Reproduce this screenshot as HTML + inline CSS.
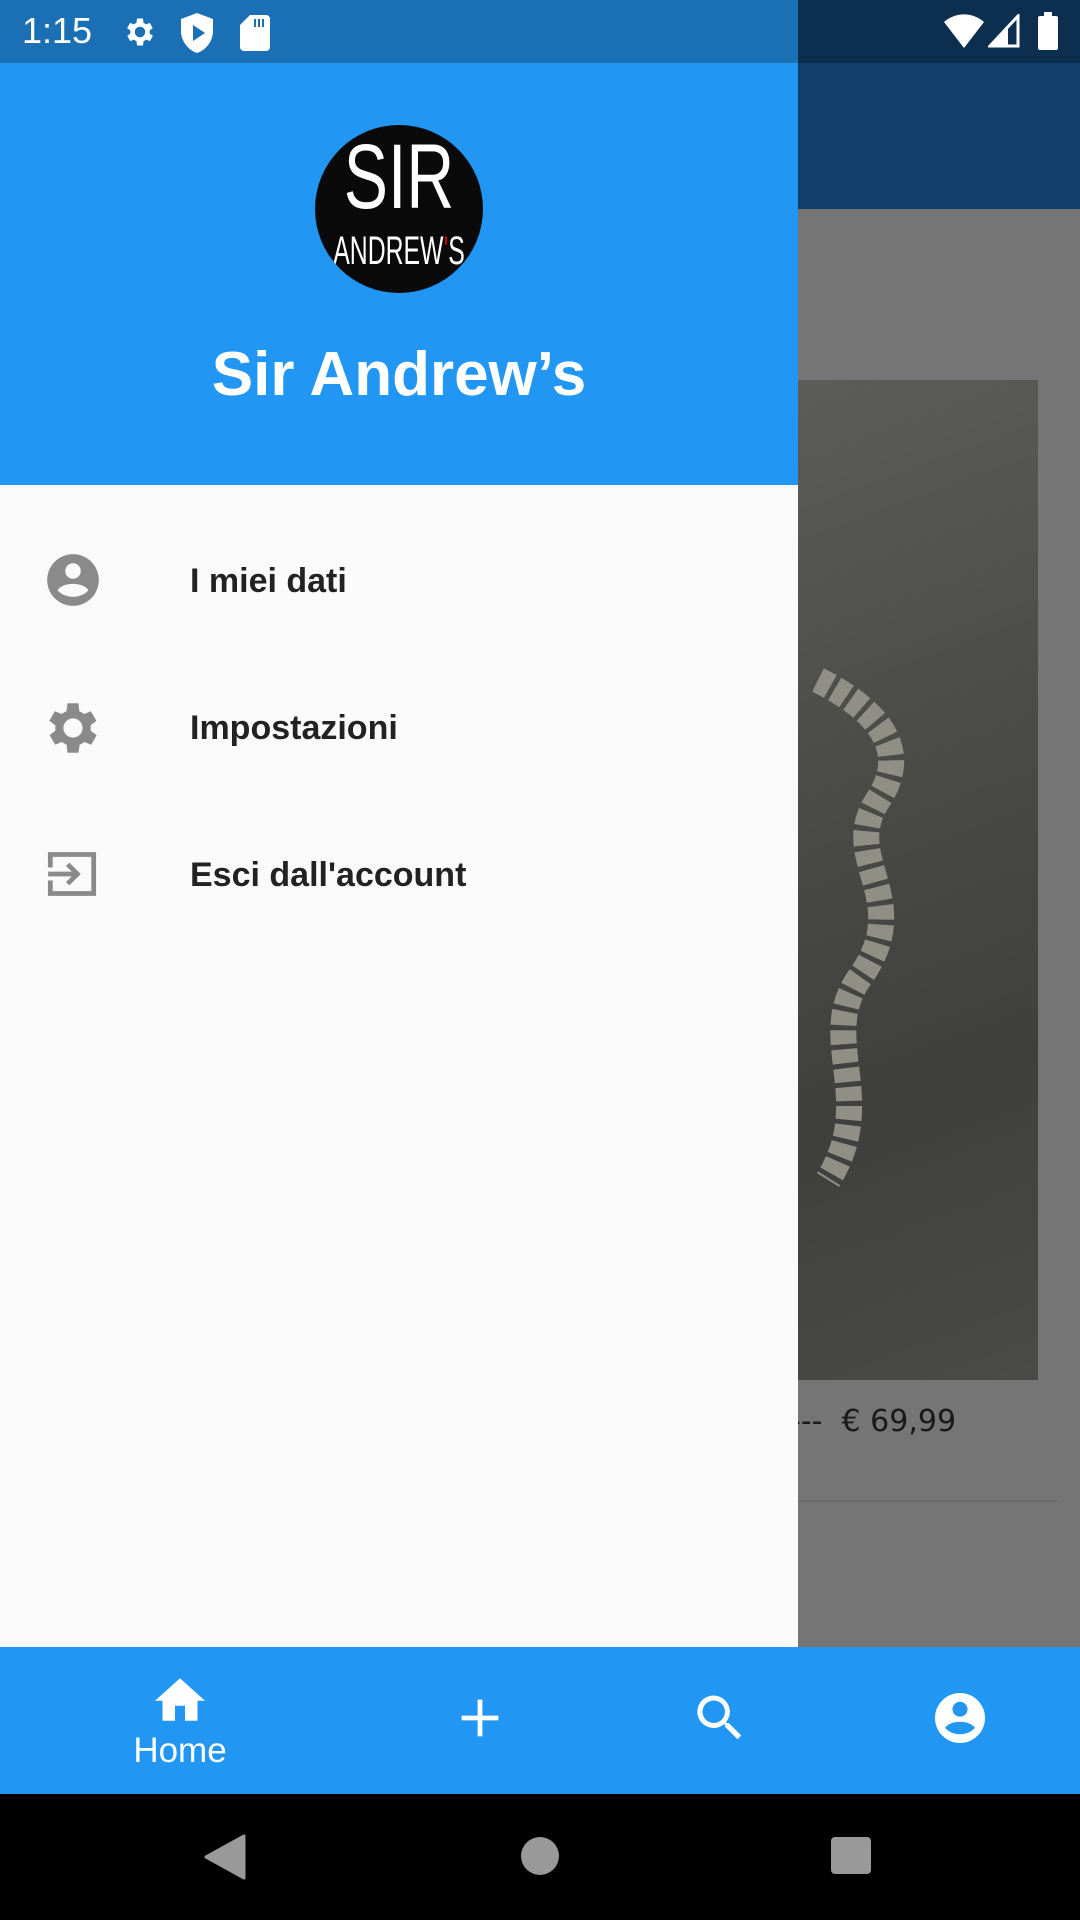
<!DOCTYPE html>
<html><head><meta charset="utf-8"><style>
*{margin:0;padding:0;box-sizing:border-box}
body{width:1080px;height:1920px;position:relative;overflow:hidden;font-family:"Liberation Sans",sans-serif;background:#757575}
.abs{position:absolute}
</style></head><body>
<!-- right side background -->
<div class="abs" style="left:798px;top:0;width:282px;height:63px;background:#0c2f50"></div>
<div class="abs" style="left:798px;top:63px;width:282px;height:146px;background:#113f6c"></div>
<div class="abs" style="left:798px;top:209px;width:282px;height:1438px;background:#757575"></div>
<div class="abs" style="left:798px;top:380px;width:240px;height:1000px;background:linear-gradient(160deg,#5c5c58,#4a4a47 40%,#3f3f3d 70%,#4a4a48)"></div>
<svg class="abs" style="left:798px;top:380px" width="240" height="1000">
<path d="M20 300 C60 320 120 360 80 420 C40 480 120 520 60 600 C20 660 80 720 30 800" stroke="#8f8f86" stroke-width="26" fill="none" stroke-dasharray="14 5"/>
</svg>
<div class="abs" style="left:790px;top:1404px;font-family:'DejaVu Sans',sans-serif;font-size:30px;color:#1a1a1a;white-space:nowrap">---&nbsp;&nbsp;€ 69,99</div>
<div class="abs" style="left:798px;top:1500px;width:260px;height:2px;background:#6a6a6a"></div>

<!-- status bar left -->
<div class="abs" style="left:0;top:0;width:798px;height:63px;background:#1a6fb5"></div>
<div class="abs" style="left:22px;top:10px;font-size:36px;color:#fff">1:15</div>
<svg class="abs" style="left:122px;top:14px" width="36" height="36" viewBox="0 0 24 24"><path fill="#fff" d="M19.4 13a7.5 7.5 0 000-2l2.1-1.6-2-3.5-2.5 1a7 7 0 00-1.7-1L15 3h-4l-.4 2.9a7 7 0 00-1.7 1l-2.5-1-2 3.5L6.6 11a7.5 7.5 0 000 2l-2.1 1.6 2 3.5 2.5-1a7 7 0 001.7 1L11 21h4l.4-2.9a7 7 0 001.7-1l2.5 1 2-3.5zM13 15.5a3.5 3.5 0 110-7 3.5 3.5 0 010 7z" transform="translate(-1 0)"/></svg>
<svg class="abs" style="left:181px;top:13px" width="32" height="40" viewBox="0 0 16 20"><path fill="#fff" d="M8 0L0 3v6c0 5 3.5 9.5 8 11 4.5-1.5 8-6 8-11V3z"/><path fill="#1a6fb5" d="M6 6v8l6-4z"/></svg>
<svg class="abs" style="left:240px;top:15px" width="30" height="36" viewBox="0 0 15 18"><path fill="#fff" d="M5 0h8a2 2 0 012 2v14a2 2 0 01-2 2H2a2 2 0 01-2-2V5z"/><path fill="#1a6fb5" d="M7 2h1v4H7zM9 2h1v4H9zM11 2h1v4h-1z"/></svg>
<svg class="abs" style="left:944px;top:14px" width="40" height="34" viewBox="0 0 20 17"><path fill="#fff" d="M0 4a15 15 0 0120 0L10 17z"/></svg>
<svg class="abs" style="left:988px;top:14px" width="32" height="34" viewBox="0 0 16 17"><path fill="none" stroke="#fff" stroke-width="1.5" d="M1 16L15 1v15z"/><path fill="#fff" d="M1 16L10 6.5V16z"/></svg>
<svg class="abs" style="left:1038px;top:12px" width="20" height="38" viewBox="0 0 10 19"><path fill="#fff" d="M3 0h4v2h2a1 1 0 011 1v15a1 1 0 01-1 1H1a1 1 0 01-1-1V3a1 1 0 011-1h2z"/></svg>

<!-- drawer -->
<div class="abs" style="left:0;top:63px;width:798px;height:422px;background:#2196f3"></div>
<div class="abs" style="left:315px;top:125px;width:168px;height:168px;border-radius:50%;background:#0a0a0a;overflow:hidden;text-align:center;color:#fff">
<div style="font-size:92px;line-height:92px;margin-top:6px;transform:scaleX(.72)">SIR</div>
<div style="font-size:40px;line-height:40px;margin-top:8px;transform:scaleX(.62);white-space:nowrap;margin-left:-40px;margin-right:-40px">ANDREW<span style="color:#c00">'</span>S</div>
</div>
<div class="abs" style="left:0;top:338px;width:798px;text-align:center;font-size:62px;font-weight:bold;color:#fff;line-height:74px">Sir Andrew’s</div>
<div class="abs" style="left:0;top:485px;width:798px;height:1162px;background:#fafafa"></div>

<svg class="abs" style="left:42px;top:549px" width="62" height="62" viewBox="0 0 24 24"><path fill="#8a8a8a" d="M12 2a10 10 0 100 20 10 10 0 000-20zm0 3.5a3 3 0 110 6 3 3 0 010-6zm0 13c-2.6 0-4.9-1.2-6-2.6 1.2-1.6 3.5-2.4 6-2.4s4.8.8 6 2.4c-1.1 1.4-3.4 2.6-6 2.6z"/></svg>
<div class="abs" style="left:190px;top:562px;font-size:34px;font-weight:bold;color:#222">I miei dati</div>
<svg class="abs" style="left:40px;top:695px" width="66" height="66" viewBox="0 0 24 24"><path fill="#8a8a8a" d="M19.4 13a7.5 7.5 0 000-2l2.1-1.6-2-3.5-2.5 1a7 7 0 00-1.7-1L15 3h-4l-.4 2.9a7 7 0 00-1.7 1l-2.5-1-2 3.5L6.6 11a7.5 7.5 0 000 2l-2.1 1.6 2 3.5 2.5-1a7 7 0 001.7 1L11 21h4l.4-2.9a7 7 0 001.7-1l2.5 1 2-3.5zM13 15.5a3.5 3.5 0 110-7 3.5 3.5 0 010 7z" transform="translate(-1 0)"/></svg>
<div class="abs" style="left:190px;top:709px;font-size:34px;font-weight:bold;color:#222">Impostazioni</div>
<svg class="abs" style="left:46px;top:848px" width="52" height="52" viewBox="0 0 24 24"><path fill="none" stroke="#8a8a8a" stroke-width="2.2" d="M2 9V3h20v18H2v-6"/><path fill="none" stroke="#8a8a8a" stroke-width="2.2" d="M1 12h13M10 7.5l4.5 4.5-4.5 4.5"/></svg>
<div class="abs" style="left:190px;top:856px;font-size:34px;font-weight:bold;color:#222">Esci dall'account</div>

<!-- bottom nav -->
<div class="abs" style="left:0;top:1647px;width:1080px;height:147px;background:#2196f3"></div>
<svg class="abs" style="left:150px;top:1670px" width="60" height="54" viewBox="0 0 24 21"><path fill="#fff" d="M10 20v-6h4v6h5v-8h3L12 3 2 12h3v8z"/></svg>
<div class="abs" style="left:100px;top:1731px;width:160px;text-align:center;font-size:35px;color:#fff">Home</div>
<svg class="abs" style="left:458px;top:1696px" width="44" height="44" viewBox="0 0 24 24"><path fill="#fff" d="M10.7 2h2.6v8.7H22v2.6h-8.7V22h-2.6v-8.7H2v-2.6h8.7z"/></svg>
<svg class="abs" style="left:690px;top:1688px" width="60" height="60" viewBox="0 0 24 24"><path fill="#fff" d="M15.5 14h-.8l-.3-.3A6.5 6.5 0 109.5 16a6.5 6.5 0 004.2-1.6l.3.3v.8l5 5 1.5-1.5zm-6 0a4.5 4.5 0 110-9 4.5 4.5 0 010 9z"/></svg>
<svg class="abs" style="left:930px;top:1688px" width="60" height="60" viewBox="0 0 24 24"><path fill="#fff" d="M12 2a10 10 0 100 20 10 10 0 000-20zm0 3.5a3 3 0 110 6 3 3 0 010-6zm0 13c-2.6 0-4.9-1.2-6-2.6 1.2-1.6 3.5-2.4 6-2.4s4.8.8 6 2.4c-1.1 1.4-3.4 2.6-6 2.6z"/></svg>

<!-- system nav -->
<div class="abs" style="left:0;top:1794px;width:1080px;height:126px;background:#000"></div>
<svg class="abs" style="left:204px;top:1834px" width="42" height="46" viewBox="0 0 42 46"><path fill="#999" d="M40 2v42L2 23z" stroke="#999" stroke-width="3" stroke-linejoin="round"/></svg>
<div class="abs" style="left:521px;top:1837px;width:38px;height:38px;border-radius:50%;background:#999"></div>
<div class="abs" style="left:831px;top:1837px;width:40px;height:37px;border-radius:4px;background:#999"></div>
</body></html>
